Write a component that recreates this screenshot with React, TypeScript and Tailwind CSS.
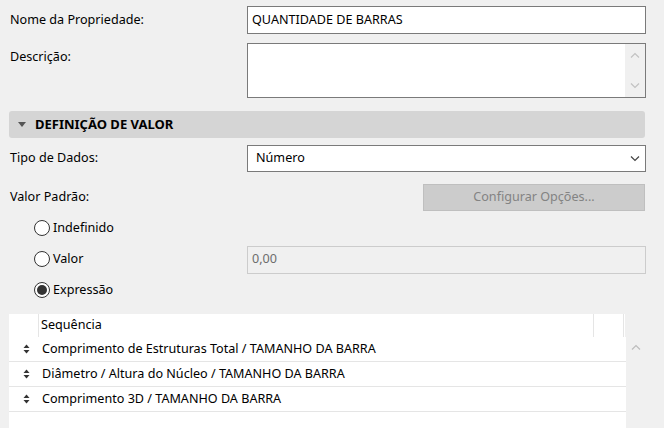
import React from "react";

const Chevron = ({ dir, color, className }: { dir: "up" | "down"; color: string; className?: string }) => (
  <svg width="10" height="6" viewBox="0 0 10 6" className={className}>
    {dir === "up" ? (
      <path d="M1 5.5 L5 1.5 L9 5.5" fill="none" stroke={color} strokeWidth="1.2" />
    ) : (
      <path d="M1 0.5 L5 4.5 L9 0.5" fill="none" stroke={color} strokeWidth="1.2" />
    )}
  </svg>
);

const Radio = ({ checked }: { checked?: boolean }) => (
  <div className="w-[16px] h-[16px] rounded-full border border-[#333333] bg-white flex items-center justify-center">
    {checked && <div className="w-[10px] h-[10px] rounded-full bg-[#333333]" />}
  </div>
);

const SortIcon = () => (
  <svg width="7" height="10" viewBox="0 0 7 10">
    <path d="M0.5 4 L3.5 0.5 L6.5 4 Z" fill="#333333" />
    <path d="M0.5 6 L3.5 9.5 L6.5 6 Z" fill="#333333" />
  </svg>
);

export default function App() {
  const rows = [
    "Comprimento de Estruturas Total / TAMANHO DA BARRA",
    "Diâmetro / Altura do Núcleo / TAMANHO DA BARRA",
    "Comprimento 3D / TAMANHO DA BARRA",
  ];
  return (
    <div
      className="w-[664px] h-[428px] bg-[#f0f0f0] overflow-hidden text-[12.6px] text-black"
      style={{ fontFamily: '"Noto Sans", "Open Sans", sans-serif' }}
    >
      {/* Nome */}
      <div className="flex items-center pt-[6px]">
        <div className="w-[247px] pl-[10px]">Nome da Propriedade:</div>
        <div className="w-[399px] h-[28px] bg-white border border-[#7a7a7a] flex items-center pl-[4px]">
          QUANTIDADE DE BARRAS
        </div>
      </div>

      {/* Descrição */}
      <div className="flex mt-[9px]">
        <div className="w-[247px] pl-[10px] pt-[5px]">Descrição:</div>
        <div className="w-[399px] h-[55px] bg-white border border-[#7a7a7a] flex justify-end">
          <div className="w-[20px] h-full bg-[#f0f0f0] flex flex-col items-center justify-between py-[8px]">
            <Chevron dir="up" color="#c2c2c2" />
            <Chevron dir="down" color="#c2c2c2" />
          </div>
        </div>
      </div>

      {/* Section header */}
      <div className="ml-[9px] mt-[13px] w-[636px] h-[27px] rounded-[3px] bg-[#d5d5d5] flex items-center">
        <svg width="8" height="5" viewBox="0 0 8 5" className="ml-[9px] mr-[9px]">
          <path d="M0 0 L8 0 L4 5 Z" fill="#555555" />
        </svg>
        <span className="font-bold text-[13px]">DEFINIÇÃO DE VALOR</span>
      </div>

      {/* Tipo de Dados */}
      <div className="flex items-center mt-[7px]">
        <div className="w-[247px] pl-[10px]">Tipo de Dados:</div>
        <div className="w-[399px] h-[27px] bg-white border border-[#7a7a7a] flex items-center justify-between pl-[8px] pr-[5px]">
          <span>Número</span>
          <Chevron dir="down" color="#444444" />
        </div>
      </div>

      {/* Valor Padrão */}
      <div className="flex items-center mt-[12px]">
        <div className="w-[423px] pl-[10px]">Valor Padrão:</div>
        <div className="w-[222px] h-[27px] bg-[#cccccc] border border-[#bfbfbf] flex items-center justify-center text-[#838383]">
          Configurar Opções...
        </div>
      </div>

      {/* Radios */}
      <div className="mt-[2px]">
        <div className="flex items-center h-[31px]">
          <div className="w-[247px] flex items-center pl-[34px] gap-[3px]">
            <Radio />
            <span>Indefinido</span>
          </div>
        </div>
        <div className="flex items-center h-[31px]">
          <div className="w-[247px] flex items-center pl-[34px] gap-[3px]">
            <Radio />
            <span>Valor</span>
          </div>
          <div className="w-[399px] h-[28px] bg-[#f0f0f0] border border-[#cccccc] flex items-center pl-[4px] text-[#6d6d6d]">
            0,00
          </div>
        </div>
        <div className="flex items-center h-[31px]">
          <div className="w-[247px] flex items-center pl-[34px] gap-[3px]">
            <Radio checked />
            <span>Expressão</span>
          </div>
        </div>
      </div>

      {/* Table */}
      <div className="mt-[8px] ml-[9px] flex">
        <div className="w-[617px]">
          <div className="h-[23px] bg-white flex items-stretch w-[616px]">
            <div className="w-[30px] border-r border-[#e5e5e5]" />
            <div className="w-[555px] border-r border-[#e5e5e5] flex items-center pl-[2px]">Sequência</div>
            <div className="w-[30px] border-r border-[#e5e5e5]" />
          </div>
          <div className="bg-white h-[120px]">
            {rows.map((r) => (
              <div key={r} className="h-[25px] border-b border-[#e5e5e5] flex items-center">
                <div className="w-[33px] flex justify-center pl-[1px]">
                  <SortIcon />
                </div>
                <span>{r}</span>
              </div>
            ))}
          </div>
        </div>
        <div className="w-[19px] flex justify-center pt-[30px]">
          <Chevron dir="up" color="#bdbdbd" />
        </div>
      </div>
    </div>
  );
}
